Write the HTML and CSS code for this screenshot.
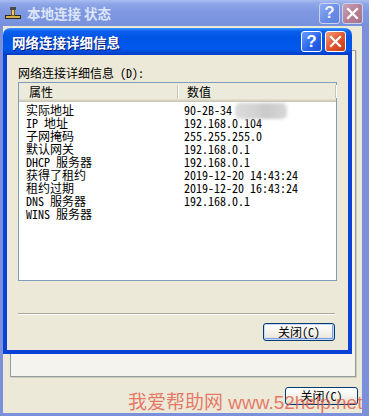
FILE: index.html
```html
<!DOCTYPE html>
<html lang="zh-CN">
<head>
  <meta charset="UTF-8">
  <meta name="viewport" content="width=device-width, initial-scale=1.0">
  <title>网络连接详细信息</title>
  <link rel="stylesheet" href="styles.css">
</head>
<body>
  <div class="desktop">

    <!-- back window: 本地连接 状态 (inactive) -->
    <div class="win win-back">
      <div class="titlebar">
        <svg class="app-icon" width="16" height="16" viewBox="0 0 16 16">
          <rect x="0.5" y="10.5" width="15" height="3" fill="#d8b04a" stroke="#2a2a2a"/>
          <rect x="6.5" y="4.5" width="3" height="6" fill="#f0cc58" stroke="#6a5520"/>
          <rect x="5" y="2" width="6" height="3" fill="#4a4a4a"/>
        </svg>
        <span class="title-text">本地连接 状态</span>
        <div class="title-btns">
          <span class="tbtn tbtn-help">?</span>
          <span class="tbtn tbtn-close">
            <svg width="13" height="13" viewBox="0 0 13 13"><path d="M2 2L11 11M11 2L2 11" stroke="#fff" stroke-width="2.2" stroke-linecap="square"/></svg>
          </span>
        </div>
      </div>
      <div class="win-body back-body">
        <div class="tab-page"></div>
        <div class="btn-row">
          <button class="xp-btn">关闭(C)</button>
        </div>
      </div>
    </div>

    <!-- front window: 网络连接详细信息 (active) -->
    <div class="win win-front">
      <div class="titlebar">
        <span class="title-text">网络连接详细信息</span>
        <div class="title-btns">
          <span class="tbtn tbtn-help">?</span>
          <span class="tbtn tbtn-close">
            <svg width="13" height="13" viewBox="0 0 13 13"><path d="M2 2L11 11M11 2L2 11" stroke="#fff" stroke-width="2.2" stroke-linecap="square"/></svg>
          </span>
        </div>
      </div>
      <div class="win-body front-body">
        <div class="list-label">网络连接详细信息 (D):</div>
        <div class="listview">
          <div class="lv-head">
            <span class="lv-col lv-col-name">属性</span>
            <span class="lv-sep"></span>
            <span class="lv-col lv-col-value">数值</span>
            <span class="lv-sep"></span>
          </div>
          <div class="lv-rows">
            <div class="lv-row"><span>实际地址</span><span>90-2B-34<span class="blur-blob"></span></span></div>
            <div class="lv-row"><span>IP 地址</span><span>192.168.0.104</span></div>
            <div class="lv-row"><span>子网掩码</span><span>255.255.255.0</span></div>
            <div class="lv-row"><span>默认网关</span><span>192.168.0.1</span></div>
            <div class="lv-row"><span>DHCP 服务器</span><span>192.168.0.1</span></div>
            <div class="lv-row"><span>获得了租约</span><span>2019-12-20 14:43:24</span></div>
            <div class="lv-row"><span>租约过期</span><span>2019-12-20 16:43:24</span></div>
            <div class="lv-row"><span>DNS 服务器</span><span>192.168.0.1</span></div>
            <div class="lv-row"><span>WINS 服务器</span><span></span></div>
          </div>
        </div>
        <div class="separator"></div>
        <div class="btn-row">
          <button class="xp-btn xp-btn-default">关闭(C)</button>
        </div>
      </div>
    </div>

    <div class="watermark">我爱帮助网 www.52help.net</div>
  </div>
</body>
</html>
```

FILE: styles.css
```css
body {
  margin: 0;
  background: #6c83d6;
}
.desktop {
  position: relative;
  width: 369px;
  height: 416px;
  overflow: hidden;
  font-family: "Noto Sans Mono CJK SC", "Noto Sans CJK SC", monospace;
  font-size: 12px;
  color: #000;
}

/* windows */
.win {
  position: absolute;
  display: flex;
  flex-direction: column;
  box-sizing: border-box;
}
.win-back {
  left: 0;
  top: 0;
  width: 369px;
  height: 416px;
}
.win-front {
  left: 3px;
  top: 28px;
  width: 349px;
  height: 326px;
}

.titlebar {
  display: flex;
  align-items: center;
  flex-shrink: 0;
  box-sizing: border-box;
}
.win-back .titlebar {
  height: 26px;
  padding: 0 6px 0 5px;
  background: linear-gradient(#a9bdef, #8ea6e8 4px, #7d97e1 12px, #7a94df 22px, #7590dc);
}
.win-front .titlebar {
  height: 27px;
  padding: 0 6px 0 9px;
  border-radius: 7px 7px 0 0;
  background: linear-gradient(#3e96ff, #0b60ee 3px, #0055e5 10px, #0158ea 21px, #0246d2 25px, #003cc8);
}
.app-icon {
  margin-right: 6px;
  flex-shrink: 0;
}
.title-text {
  flex: 1;
  font-family: "Noto Sans CJK SC", sans-serif;
  font-weight: 700;
  font-size: 13.5px;
  white-space: pre;
}
.win-back .title-text {
  color: #dde5f8;
}
.win-front .title-text {
  color: #fff;
  text-shadow: 1px 1px 0 #0a1a7a;
}
.title-btns {
  display: flex;
  gap: 2px;
}
.win-front .title-btns {
  gap: 3px;
}
.tbtn {
  width: 21px;
  height: 21px;
  box-sizing: border-box;
  border: 1px solid #fff;
  border-radius: 3px;
  display: flex;
  align-items: center;
  justify-content: center;
  color: #fff;
  font-family: "Liberation Sans", sans-serif;
  font-weight: 700;
  font-size: 17px;
}
.win-front .tbtn-help {
  background: linear-gradient(135deg, #6a9cff, #2a67ec 55%, #1a50d8);
}
.win-front .tbtn-close {
  background: linear-gradient(135deg, #f4a080, #e2572f 50%, #c63c16);
}
.win-back .tbtn {
  border-color: #c9d3f0;
}
.win-back .tbtn-help {
  background: linear-gradient(135deg, #8eacf2, #6a8ce6 55%, #5f80de);
  color: #eef2fc;
}
.win-back .tbtn-close {
  background: linear-gradient(135deg, #c8a2b4, #b47f96 55%, #a8728a);
}

.win-body {
  flex: 1;
  background: #ece9d8;
  display: flex;
  flex-direction: column;
}
.back-body {
  border-style: solid;
  border-color: #7b90da;
  border-width: 0 7px 3px 3px;
}
.front-body {
  border: 4px solid #0a41d8;
  border-top: 0;
  padding: 11px 11px 9px 11px;
}

/* back window content */
.tab-page {
  margin: 24px 6px 0 7px;
  height: 327px;
  box-sizing: border-box;
  background: #f4f3ee;
  border: 1px solid #919b9c;
  box-shadow: 1px 1px 0 #d0cdbd;
}
.back-body .btn-row {
  margin-top: 10px;
  padding-right: 4px;
}

/* front window content */
.list-label {
  line-height: 14px;
  height: 14px;
  margin-bottom: 2px;
  white-space: pre;
}
.listview {
  height: 199px;
  box-sizing: border-box;
  border: 1px solid #7f9db9;
  background: #fff;
}
.lv-head {
  display: flex;
  align-items: center;
  height: 19px;
  background: #ebeadb;
  box-shadow: inset 0 -1px 0 #cbc7b8, inset 0 -2px 0 #d6d2c2, inset 0 -3px 0 #e2decd;
}
.lv-col {
  line-height: 16px;
  padding-bottom: 2px;
}
.lv-col-name {
  width: 148px;
  padding-left: 10px;
}
.lv-col-value {
  width: 148px;
  padding-left: 9px;
}
.lv-sep {
  width: 1px;
  height: 13px;
  margin-bottom: 2px;
  background: #c7c5b2;
  box-shadow: 1px 0 0 #fff;
}
.lv-rows {
  padding-top: 1px;
}
.lv-row {
  display: grid;
  grid-template-columns: 158px 1fr;
  padding-left: 7px;
  height: 13px;
  line-height: 13px;
  white-space: pre;
}
.blur-blob {
  display: inline-block;
  width: 52px;
  height: 16px;
  margin: -3px 0 -2px 3px;
  vertical-align: middle;
  border-radius: 5px;
  background: linear-gradient(90deg, #dcdcdc, #d2d2d2 40%, #c9c9c9 60%, #d8d8d8);
  filter: blur(1.5px);
}
.separator {
  margin: 32px 2px 0 0;
  height: 1px;
  background: #aca899;
  border-bottom: 1px solid #fff;
}
.front-body .btn-row {
  margin-top: 8px;
  padding-right: 2px;
}

.btn-row {
  display: flex;
  justify-content: flex-end;
}
.xp-btn {
  width: 73px;
  height: 18px;
  padding: 0;
  box-sizing: border-box;
  border: 1px solid #003c74;
  border-radius: 3px;
  background: linear-gradient(#ffffff, #f5f4ef 45%, #ece9de 80%, #d8d3c8);
  font-family: "Noto Sans Mono CJK SC", "Noto Sans CJK SC", monospace;
  font-size: 12px;
  line-height: 14px;
  color: #000;
}
.xp-btn-default {
  width: 72px;
  box-shadow: inset 0 0 0 1px #c6d9fb, inset -1px -1px 0 1px #7b9ee8;
}

.watermark {
  position: absolute;
  left: 128px;
  top: 393px;
  font-family: "Liberation Sans", "Noto Sans CJK SC", sans-serif;
  font-size: 19px;
  line-height: 20px;
  white-space: pre;
  color: rgba(228, 88, 68, 0.78);
}
```
